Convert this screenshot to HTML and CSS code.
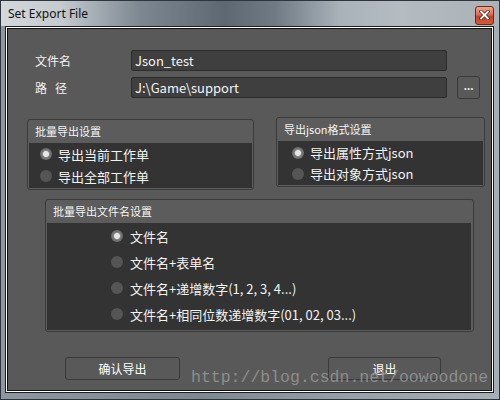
FILE: index.html
```html
<!DOCTYPE html>
<html>
<head>
<meta charset="utf-8">
<link rel="stylesheet" href="styles.css">
</head>
<body>
<div class="window">
  <div class="titlebar">
    <span class="title">Set Export File</span>
    <div class="close">
      <svg width="11" height="10" viewBox="0 0 11 10"><path d="M2 1.5 L9 8.5 M9 1.5 L2 8.5" stroke="#5a2a20" stroke-width="3.4" stroke-linecap="square"/><path d="M2 1.5 L9 8.5 M9 1.5 L2 8.5" stroke="#ffffff" stroke-width="1.8" stroke-linecap="square"/></svg>
    </div>
  </div>
  <div class="frame">
    <div class="edge-white">
      <div class="client">
        <div class="field-row first">
          <span class="label">文件名</span>
          <div class="input">Json_test</div>
        </div>
        <div class="field-row second">
          <span class="label spaced">路径</span>
          <div class="input">J:\Game\support</div>
          <div class="browse">...</div>
        </div>
        <div class="groups-row">
          <div class="group g1">
            <div class="group-title">批量导出设置</div>
            <div class="group-body">
              <div class="radio-row"><span class="radio on"></span><span>导出当前工作单</span></div>
              <div class="radio-row"><span class="radio"></span><span>导出全部工作单</span></div>
            </div>
          </div>
          <div class="group g2">
            <div class="group-title">导出json格式设置</div>
            <div class="group-body">
              <div class="radio-row"><span class="radio on"></span><span>导出属性方式json</span></div>
              <div class="radio-row"><span class="radio"></span><span>导出对象方式json</span></div>
            </div>
          </div>
        </div>
        <div class="group g3">
          <div class="group-title">批量导出文件名设置</div>
          <div class="group-body">
            <div class="radio-row"><span class="radio on"></span><span>文件名</span></div>
            <div class="radio-row"><span class="radio"></span><span>文件名+表单名</span></div>
            <div class="radio-row"><span class="radio"></span><span>文件名+递增数字(1, 2, 3, 4...)</span></div>
            <div class="radio-row"><span class="radio"></span><span>文件名+相同位数递增数字(01, 02, 03...)</span></div>
          </div>
        </div>
        <div class="buttons-row">
          <div class="button ok">确认导出</div>
          <div class="button quit">退出</div>
        </div>
      </div>
    </div>
  </div>
  <div class="watermark">http://blog.csdn.net/oowoodone</div>
</div>
</body>
</html>
```
FILE: styles.css
```css
* { box-sizing: border-box; }
html, body { margin: 0; padding: 0; }
body {
  width: 500px;
  height: 400px;
  overflow: hidden;
  font-family: "Noto Sans CJK SC", "Noto Sans", sans-serif;
}
.window {
  position: relative;
  width: 500px;
  height: 400px;
  border: 1px solid #2f353c;
  background: linear-gradient(90deg, #8e979f 0%, #7d8790 40%, #96a0a8 70%, #a7afb6 100%);
  display: flex;
  flex-direction: column;
}
.titlebar {
  height: 25px;
  flex: none;
  display: flex;
  align-items: center;
  justify-content: space-between;
  padding: 0 5px 0 7px;
  background: linear-gradient(90deg, #d4d8dc 0%, #c4cad0 12%, #7c8791 28%, #5d6873 45%, #6f7a84 55%, #a9b2b9 68%, #b4bcc2 80%, #aab2b8 100%);
}
.title {
  font-family: "Noto Sans", sans-serif;
  font-size: 12px;
  color: #111;
  line-height: 25px;
}
.close {
  width: 19px;
  height: 19px;
  margin-top: 3px;
  border: 1px solid #6b2a1e;
  border-radius: 3px;
  background: linear-gradient(180deg, #eea58e 0%, #de6e52 45%, #c8402a 55%, #d45a3c 100%);
  display: flex;
  align-items: center;
  justify-content: center;
}
.frame {
  margin: 0 5px 6px 4px;
  flex: 1;
  border: 1px solid #1e1e1e;
  display: flex;
}
.edge-white {
  flex: 1;
  border: 1px solid #ffffff;
  display: flex;
}
.client {
  flex: 1;
  border: 1px solid #111111;
  background: #595959;
  color: #f2f2f2;
  display: flex;
  flex-direction: column;
}
.field-row {
  display: flex;
  align-items: center;
  padding-left: 27px;
}
.field-row.first { margin-top: 21px; }
.field-row.second { margin-top: 5px; }
.label {
  width: 96px;
  font-size: 12px;
  line-height: 21px;
}
.label.spaced { letter-spacing: 8px; }
.input {
  width: 316px;
  height: 21px;
  border: 1px solid #2c2c2c;
  border-radius: 2px;
  background: #3f3f3f;
  font-size: 13px;
  line-height: 19px;
  padding-left: 3px;
  color: #f4f4f4;
}
.browse {
  width: 23px;
  height: 23px;
  margin-left: 10px;
  border: 1px solid #3a3a3a;
  border-radius: 3px;
  font-size: 10px;
  font-weight: bold;
  line-height: 17px;
  text-align: center;
  color: #eee;
}
.groups-row {
  display: flex;
  align-items: flex-start;
  margin-top: 18px;
  padding-left: 19px;
}
.group {
  border: 1px solid #3b3b3b;
  border-radius: 3px;
  background: #5c5c5c;
}
.group-title {
  height: 23px;
  line-height: 23px;
  font-size: 11px;
  padding-left: 7px;
  color: #f4f4f4;
}
.group-body {
  background: #333333;
  margin: 0 1px 1px 1px;
}
.g1 { width: 227px; margin-top: 2px; }
.g1 .group-body { padding-bottom: 1px; }
.g1 .radio-row { height: 22px; padding-left: 11px; }
.g2 { width: 209px; margin-left: 22px; }
.g2 .group-body { padding: 1px 0 1px; }
.g2 .radio-row { height: 21px; padding-left: 14px; }
.g3 { width: 429px; margin: 9px 0 0 37px; }
.g3 .group-body { padding-bottom: 3px; margin-right: 2px; }
.g3 .radio-row { height: 26px; padding-left: 64px; gap: 7px; }
.radio-row {
  display: flex;
  align-items: center;
  gap: 6px;
  font-size: 13px;
  color: #f2f2f2;
}
.radio {
  width: 12px;
  height: 12px;
  border-radius: 50%;
  background: #555555;
  flex: none;
}
.radio.on {
  background: radial-gradient(circle, #e6e6e6 0, #e6e6e6 2.6px, #8a8a8a 3.4px, #737373 4.5px, #6a6a6a 6px);
}
.buttons-row {
  display: flex;
  margin-top: 25px;
  padding-left: 57px;
}
.button {
  height: 23px;
  border: 1px solid #3a3a3a;
  border-radius: 3px;
  font-size: 12px;
  line-height: 21px;
  text-align: center;
  color: #ffffff;
}
.ok { width: 115px; }
.quit { width: 113px; margin-left: 148px; }
.watermark {
  position: absolute;
  left: 190px;
  top: 367px;
  font-family: "Liberation Mono", monospace;
  font-size: 16.5px;
  line-height: 20px;
  color: #8d8d8d;
  pointer-events: none;
}
```
